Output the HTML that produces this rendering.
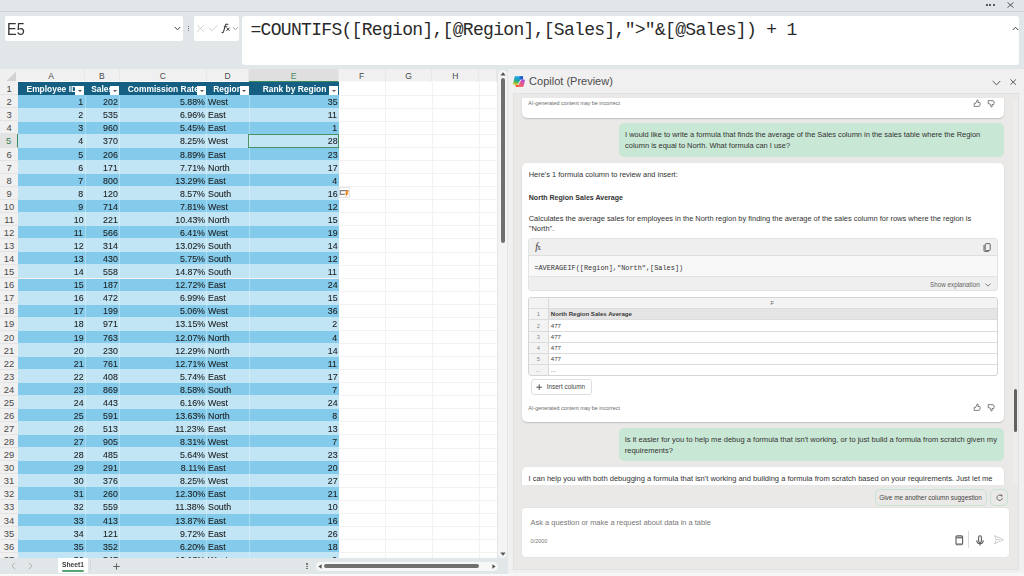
<!DOCTYPE html>
<html><head><meta charset="utf-8">
<style>
*{box-sizing:border-box;margin:0;padding:0}
html,body{width:1024px;height:576px;overflow:hidden;background:#e1e6e9;font-family:"Liberation Sans",sans-serif;position:relative}
.abs{position:absolute}
#top{position:absolute;left:0;top:0;width:1024px;height:12px;background:#e0e6e9;border-bottom:1.4px solid #cdd3d6;box-shadow:0 0.6px 1px rgba(0,0,0,.05)}
#fbar{position:absolute;left:0;top:12px;width:1024px;height:57.3px;background:#e1e6e9}
.wbox{position:absolute;background:#fff;border-radius:2px}
#sheet{position:absolute;left:0;top:69.3px;width:497.2px;height:488.7px;background:#fff;overflow:hidden}
#sheetin{position:absolute;left:0;top:-69.3px;width:497.2px;height:576px}
.colhdr{position:absolute;background:#f0f0f0}
.ch{position:absolute;top:69.3px;height:12.9px;font-size:8.5px;line-height:15.2px;text-align:center;color:#4a4a4a;border-right:1px solid #e8e8e8;border-bottom:1px solid #fafafa}
.ch.sel{background:#dfdfdf;color:#4b8b5f;border-bottom:1.2px solid #3f8a5a}
.rh{position:absolute;left:0;width:18px;height:13.07px;background:#f0f0f0;font-size:9.4px;line-height:13.3px;text-align:center;color:#4a4a4a;border-bottom:1px solid #e4e4e4}
.rh.sel{background:#e2e2e2;color:#3b7d50;border-right:1.5px solid #3c8a56}
.gl{position:absolute;left:18px;width:480px;height:1px;background:#f2f2f2}
.vl{position:absolute;top:82.2px;width:1px;height:480px;background:#f2f2f2}
.thead{position:absolute;background:#156082}
.th{position:absolute;height:13.07px;font-size:8.6px;font-weight:bold;color:#fff;line-height:14.4px;text-align:center;overflow:hidden;white-space:nowrap}
.th span{display:inline-block;transform:scaleX(.98);transform-origin:center}
.fb{position:absolute;width:9px;height:9px;background:#fff}
.fb:after{content:"";position:absolute;left:2.6px;top:3.6px;border-left:2px solid transparent;border-right:2px solid transparent;border-top:2px solid #555}
.band{position:absolute;left:18px;width:320.8px;height:13.07px}
.b1{background:#84cbeb}
.b2{background:#c1e5f5}
.td{position:absolute;height:13.07px;font-size:9.5px;line-height:14.2px;color:#1a1a1a;white-space:nowrap;-webkit-text-stroke:0.08px #1a1a1a}
.td.r{text-align:right}
.td.r span{display:inline-block;transform:scaleX(.93);transform-origin:right}
.td.l span{display:inline-block;transform:scaleX(.93);transform-origin:left}
.tdiv{position:absolute;width:1px;background:rgba(255,255,255,.3)}
.selbox{position:absolute;border:1px solid #4a9262}
#vscroll{position:absolute;left:497.6px;top:69.6px;width:9.4px;height:488.8px;background:#f4f4f4;border-radius:5px}
#bottombar{position:absolute;left:0;top:558px;width:508px;height:17px;background:#e1e6e9}
#copilot{position:absolute;left:507.6px;top:69.3px;width:516.4px;height:506.7px;background:#f0f0f0}
#chat{position:absolute;left:513.2px;top:92.6px;width:505.5px;height:477px;background:#ebe9e7;border:1px solid #e3e1df}
.card{position:absolute;background:#fff;border-radius:5px;box-shadow:0 1px 1.5px rgba(0,0,0,.18)}
.bubble{position:absolute;background:#c9e7d5;border-radius:5px}
.t{position:absolute;white-space:nowrap;color:#303030}
</style></head><body>
<div id="top"></div>
<!-- top-right window icons -->
<div class="abs" style="left:985.8px;top:4.2px;width:9px;height:3px">
  <div class="abs" style="left:0;top:0;width:1.8px;height:1.8px;background:#5a5a5a"></div>
  <div class="abs" style="left:3.5px;top:0;width:1.8px;height:1.8px;background:#5a5a5a"></div>
  <div class="abs" style="left:7px;top:0;width:1.8px;height:1.8px;background:#5a5a5a"></div>
</div>
<svg class="abs" style="left:1007.4px;top:2.2px" width="7" height="6" viewBox="0 0 7 6"><path d="M0.5 0.4 L6.5 5.6 M6.5 0.4 L0.5 5.6" stroke="#444" stroke-width="0.9"/></svg>
<div id="fbar"></div>
<div class="wbox" style="left:5px;top:16px;width:177.7px;height:24.7px"></div>
<div class="t" style="left:6.8px;top:17px;font-size:17.2px;line-height:24px;color:#333;transform:scaleX(.84);transform-origin:left">E5</div>
<svg class="abs" style="left:173.8px;top:25.8px" width="7" height="5" viewBox="0 0 7 5"><path d="M0.8 1 L3.5 3.8 L6.2 1" stroke="#444" stroke-width="1" fill="none"/></svg>
<div class="abs" style="left:187.8px;top:25.6px;width:1.5px;height:1.5px;background:#555;border-radius:1px"></div>
<div class="abs" style="left:187.8px;top:27.7px;width:1.5px;height:1.5px;background:#555;border-radius:1px"></div>
<div class="abs" style="left:187.8px;top:29.8px;width:1.5px;height:1.5px;background:#555;border-radius:1px"></div>
<div class="wbox" style="left:194.4px;top:16px;width:44.2px;height:24.7px"></div>
<svg class="abs" style="left:192px;top:18px" width="50" height="20" viewBox="0 0 50 20">
<path d="M5.3 7.2 L11.9 13.6 M11.9 7.2 L5.3 13.6" stroke="#c4c4c4" stroke-width="0.8" fill="none"/>
<path d="M17.2 9.6 L19.8 12.8 L25.5 7.2" stroke="#c4c4c4" stroke-width="0.8" fill="none"/>
<path d="M35.8 6.4 C34.6 5.6 33.6 6.4 33.2 8 L31.6 13.4 C31.2 14.6 30.6 14.9 30 14.3" stroke="#3a3a3a" stroke-width="1.1" fill="none" stroke-linecap="round"/>
<path d="M31.8 8.6 H35.4" stroke="#3a3a3a" stroke-width="0.8"/>
<path d="M34.4 9.6 L37.6 12.9 M37.6 9.6 L34.4 12.9" stroke="#3a3a3a" stroke-width="1" fill="none"/>
<path d="M40.9 9.2 L43.4 11.6 L45.9 9.2" stroke="#8a8a8a" stroke-width="0.8" fill="none"/>
</svg>
<div class="wbox" style="left:242.3px;top:16px;width:776.7px;height:48.7px;border-radius:3px"></div>
<div class="t" style="left:250.5px;top:18.7px;font-family:'Liberation Mono',monospace;font-size:18px;letter-spacing:-0.69px;line-height:22px;color:#2a2a2a">=COUNTIFS([Region],[@Region],[Sales],"&gt;"&amp;[@Sales]) + 1</div>
<svg class="abs" style="left:1011.5px;top:25.5px" width="7" height="5" viewBox="0 0 7 5"><path d="M0.8 4 L3.5 1.2 L6.2 4" stroke="#444" stroke-width="1" fill="none"/></svg>

<div id="sheet"><div id="sheetin">
<div class="colhdr" style="left:0;top:69.3px;width:497.2px;height:12.9px"></div>
<div class="ch" style="left:18px;width:67px">A</div>
<div class="ch" style="left:85px;width:34.8px">B</div>
<div class="ch" style="left:119.8px;width:86.8px">C</div>
<div class="ch" style="left:206.6px;width:42.8px">D</div>
<div class="ch sel" style="left:249.4px;width:89.4px">E</div>
<div class="ch" style="left:338.8px;width:46.8px">F</div>
<div class="ch" style="left:385.6px;width:46.8px">G</div>
<div class="ch" style="left:432.4px;width:46.8px">H</div>
<div class="ch" style="left:479.2px;width:18px"></div>
<div class="rh" style="top:82.2px">1</div>
<div class="gl" style="top:94.67px"></div>
<div class="rh" style="top:95.27px">2</div>
<div class="gl" style="top:107.74px"></div>
<div class="rh" style="top:108.34px">3</div>
<div class="gl" style="top:120.81px"></div>
<div class="rh" style="top:121.41px">4</div>
<div class="gl" style="top:133.88px"></div>
<div class="rh sel" style="top:134.48px">5</div>
<div class="gl" style="top:146.95px"></div>
<div class="rh" style="top:147.55px">6</div>
<div class="gl" style="top:160.02px"></div>
<div class="rh" style="top:160.62px">7</div>
<div class="gl" style="top:173.09px"></div>
<div class="rh" style="top:173.69px">8</div>
<div class="gl" style="top:186.16px"></div>
<div class="rh" style="top:186.76px">9</div>
<div class="gl" style="top:199.23px"></div>
<div class="rh" style="top:199.83px">10</div>
<div class="gl" style="top:212.3px"></div>
<div class="rh" style="top:212.9px">11</div>
<div class="gl" style="top:225.37px"></div>
<div class="rh" style="top:225.97px">12</div>
<div class="gl" style="top:238.44px"></div>
<div class="rh" style="top:239.04px">13</div>
<div class="gl" style="top:251.51px"></div>
<div class="rh" style="top:252.11px">14</div>
<div class="gl" style="top:264.58px"></div>
<div class="rh" style="top:265.18px">15</div>
<div class="gl" style="top:277.65px"></div>
<div class="rh" style="top:278.25px">16</div>
<div class="gl" style="top:290.72px"></div>
<div class="rh" style="top:291.32px">17</div>
<div class="gl" style="top:303.79px"></div>
<div class="rh" style="top:304.39px">18</div>
<div class="gl" style="top:316.86px"></div>
<div class="rh" style="top:317.46px">19</div>
<div class="gl" style="top:329.93px"></div>
<div class="rh" style="top:330.53px">20</div>
<div class="gl" style="top:343px"></div>
<div class="rh" style="top:343.6px">21</div>
<div class="gl" style="top:356.07px"></div>
<div class="rh" style="top:356.67px">22</div>
<div class="gl" style="top:369.14px"></div>
<div class="rh" style="top:369.74px">23</div>
<div class="gl" style="top:382.21px"></div>
<div class="rh" style="top:382.81px">24</div>
<div class="gl" style="top:395.28px"></div>
<div class="rh" style="top:395.88px">25</div>
<div class="gl" style="top:408.35px"></div>
<div class="rh" style="top:408.95px">26</div>
<div class="gl" style="top:421.42px"></div>
<div class="rh" style="top:422.02px">27</div>
<div class="gl" style="top:434.49px"></div>
<div class="rh" style="top:435.09px">28</div>
<div class="gl" style="top:447.56px"></div>
<div class="rh" style="top:448.16px">29</div>
<div class="gl" style="top:460.63px"></div>
<div class="rh" style="top:461.23px">30</div>
<div class="gl" style="top:473.7px"></div>
<div class="rh" style="top:474.3px">31</div>
<div class="gl" style="top:486.77px"></div>
<div class="rh" style="top:487.37px">32</div>
<div class="gl" style="top:499.84px"></div>
<div class="rh" style="top:500.44px">33</div>
<div class="gl" style="top:512.91px"></div>
<div class="rh" style="top:513.51px">34</div>
<div class="gl" style="top:525.98px"></div>
<div class="rh" style="top:526.58px">35</div>
<div class="gl" style="top:539.05px"></div>
<div class="rh" style="top:539.65px">36</div>
<div class="gl" style="top:552.12px"></div>
<div class="rh" style="top:552.72px">37</div>
<div class="gl" style="top:565.19px"></div>
<div class="vl" style="left:338.3px"></div>
<div class="vl" style="left:385.1px"></div>
<div class="vl" style="left:431.9px"></div>
<div class="vl" style="left:478.7px"></div>
<div class="thead" style="left:18px;top:82.2px;width:320.8px;height:13.07px"></div>
<div class="th" style="left:18px;top:82.2px;width:67px"><span>Employee ID</span></div>
<div class="fb" style="left:75.4px;top:86px"></div>
<div class="th" style="left:85px;top:82.2px;width:34.8px"><span>Sales</span></div>
<div class="fb" style="left:110.2px;top:86px"></div>
<div class="th" style="left:119.8px;top:82.2px;width:86.8px"><span>Commission Rate</span></div>
<div class="fb" style="left:197px;top:86px"></div>
<div class="th" style="left:206.6px;top:82.2px;width:42.8px"><span>Region</span></div>
<div class="fb" style="left:239.8px;top:86px"></div>
<div class="th" style="left:249.4px;top:82.2px;width:89.4px"><span>Rank by Region</span></div>
<div class="fb" style="left:329.2px;top:86px"></div>
<div class="band b1" style="top:95.2px;height:12.4px"></div>
<div class="td r" style="left:18px;top:95.27px;width:65.3px"><span>1</span></div>
<div class="td r" style="left:85px;top:95.27px;width:33.1px"><span>202</span></div>
<div class="td r" style="left:119.8px;top:95.27px;width:85.1px"><span>5.88%</span></div>
<div class="td l" style="left:208.1px;top:95.27px;width:40.8px"><span>West</span></div>
<div class="td r" style="left:249.4px;top:95.27px;width:87.7px"><span>35</span></div>
<div class="band b2" style="top:107.6px;height:14.18px"></div>
<div class="td r" style="left:18px;top:108.34px;width:65.3px"><span>2</span></div>
<div class="td r" style="left:85px;top:108.34px;width:33.1px"><span>535</span></div>
<div class="td r" style="left:119.8px;top:108.34px;width:85.1px"><span>6.96%</span></div>
<div class="td l" style="left:208.1px;top:108.34px;width:40.8px"><span>East</span></div>
<div class="td r" style="left:249.4px;top:108.34px;width:87.7px"><span>11</span></div>
<div class="band b1" style="top:121.78px;height:11.96px"></div>
<div class="td r" style="left:18px;top:121.41px;width:65.3px"><span>3</span></div>
<div class="td r" style="left:85px;top:121.41px;width:33.1px"><span>960</span></div>
<div class="td r" style="left:119.8px;top:121.41px;width:85.1px"><span>5.45%</span></div>
<div class="td l" style="left:208.1px;top:121.41px;width:40.8px"><span>East</span></div>
<div class="td r" style="left:249.4px;top:121.41px;width:87.7px"><span>1</span></div>
<div class="band b2" style="top:133.74px;height:14.16px"></div>
<div class="td r" style="left:18px;top:134.48px;width:65.3px"><span>4</span></div>
<div class="td r" style="left:85px;top:134.48px;width:33.1px"><span>370</span></div>
<div class="td r" style="left:119.8px;top:134.48px;width:85.1px"><span>8.25%</span></div>
<div class="td l" style="left:208.1px;top:134.48px;width:40.8px"><span>West</span></div>
<div class="td r" style="left:249.4px;top:134.48px;width:87.7px"><span>28</span></div>
<div class="band b1" style="top:147.9px;height:11.98px"></div>
<div class="td r" style="left:18px;top:147.55px;width:65.3px"><span>5</span></div>
<div class="td r" style="left:85px;top:147.55px;width:33.1px"><span>206</span></div>
<div class="td r" style="left:119.8px;top:147.55px;width:85.1px"><span>8.89%</span></div>
<div class="td l" style="left:208.1px;top:147.55px;width:40.8px"><span>East</span></div>
<div class="td r" style="left:249.4px;top:147.55px;width:87.7px"><span>23</span></div>
<div class="band b2" style="top:159.88px;height:14.14px"></div>
<div class="td r" style="left:18px;top:160.62px;width:65.3px"><span>6</span></div>
<div class="td r" style="left:85px;top:160.62px;width:33.1px"><span>171</span></div>
<div class="td r" style="left:119.8px;top:160.62px;width:85.1px"><span>7.71%</span></div>
<div class="td l" style="left:208.1px;top:160.62px;width:40.8px"><span>North</span></div>
<div class="td r" style="left:249.4px;top:160.62px;width:87.7px"><span>17</span></div>
<div class="band b1" style="top:174.02px;height:12px"></div>
<div class="td r" style="left:18px;top:173.69px;width:65.3px"><span>7</span></div>
<div class="td r" style="left:85px;top:173.69px;width:33.1px"><span>800</span></div>
<div class="td r" style="left:119.8px;top:173.69px;width:85.1px"><span>13.29%</span></div>
<div class="td l" style="left:208.1px;top:173.69px;width:40.8px"><span>East</span></div>
<div class="td r" style="left:249.4px;top:173.69px;width:87.7px"><span>4</span></div>
<div class="band b2" style="top:186.02px;height:14.12px"></div>
<div class="td r" style="left:18px;top:186.76px;width:65.3px"><span>8</span></div>
<div class="td r" style="left:85px;top:186.76px;width:33.1px"><span>120</span></div>
<div class="td r" style="left:119.8px;top:186.76px;width:85.1px"><span>8.57%</span></div>
<div class="td l" style="left:208.1px;top:186.76px;width:40.8px"><span>South</span></div>
<div class="td r" style="left:249.4px;top:186.76px;width:87.7px"><span>16</span></div>
<div class="band b1" style="top:200.14px;height:12.02px"></div>
<div class="td r" style="left:18px;top:199.83px;width:65.3px"><span>9</span></div>
<div class="td r" style="left:85px;top:199.83px;width:33.1px"><span>714</span></div>
<div class="td r" style="left:119.8px;top:199.83px;width:85.1px"><span>7.81%</span></div>
<div class="td l" style="left:208.1px;top:199.83px;width:40.8px"><span>West</span></div>
<div class="td r" style="left:249.4px;top:199.83px;width:87.7px"><span>12</span></div>
<div class="band b2" style="top:212.16px;height:14.1px"></div>
<div class="td r" style="left:18px;top:212.9px;width:65.3px"><span>10</span></div>
<div class="td r" style="left:85px;top:212.9px;width:33.1px"><span>221</span></div>
<div class="td r" style="left:119.8px;top:212.9px;width:85.1px"><span>10.43%</span></div>
<div class="td l" style="left:208.1px;top:212.9px;width:40.8px"><span>North</span></div>
<div class="td r" style="left:249.4px;top:212.9px;width:87.7px"><span>15</span></div>
<div class="band b1" style="top:226.26px;height:12.04px"></div>
<div class="td r" style="left:18px;top:225.97px;width:65.3px"><span>11</span></div>
<div class="td r" style="left:85px;top:225.97px;width:33.1px"><span>566</span></div>
<div class="td r" style="left:119.8px;top:225.97px;width:85.1px"><span>6.41%</span></div>
<div class="td l" style="left:208.1px;top:225.97px;width:40.8px"><span>West</span></div>
<div class="td r" style="left:249.4px;top:225.97px;width:87.7px"><span>19</span></div>
<div class="band b2" style="top:238.3px;height:14.08px"></div>
<div class="td r" style="left:18px;top:239.04px;width:65.3px"><span>12</span></div>
<div class="td r" style="left:85px;top:239.04px;width:33.1px"><span>314</span></div>
<div class="td r" style="left:119.8px;top:239.04px;width:85.1px"><span>13.02%</span></div>
<div class="td l" style="left:208.1px;top:239.04px;width:40.8px"><span>South</span></div>
<div class="td r" style="left:249.4px;top:239.04px;width:87.7px"><span>14</span></div>
<div class="band b1" style="top:252.38px;height:12.06px"></div>
<div class="td r" style="left:18px;top:252.11px;width:65.3px"><span>13</span></div>
<div class="td r" style="left:85px;top:252.11px;width:33.1px"><span>430</span></div>
<div class="td r" style="left:119.8px;top:252.11px;width:85.1px"><span>5.75%</span></div>
<div class="td l" style="left:208.1px;top:252.11px;width:40.8px"><span>South</span></div>
<div class="td r" style="left:249.4px;top:252.11px;width:87.7px"><span>12</span></div>
<div class="band b2" style="top:264.44px;height:14.06px"></div>
<div class="td r" style="left:18px;top:265.18px;width:65.3px"><span>14</span></div>
<div class="td r" style="left:85px;top:265.18px;width:33.1px"><span>558</span></div>
<div class="td r" style="left:119.8px;top:265.18px;width:85.1px"><span>14.87%</span></div>
<div class="td l" style="left:208.1px;top:265.18px;width:40.8px"><span>South</span></div>
<div class="td r" style="left:249.4px;top:265.18px;width:87.7px"><span>11</span></div>
<div class="band b1" style="top:278.5px;height:12.08px"></div>
<div class="td r" style="left:18px;top:278.25px;width:65.3px"><span>15</span></div>
<div class="td r" style="left:85px;top:278.25px;width:33.1px"><span>187</span></div>
<div class="td r" style="left:119.8px;top:278.25px;width:85.1px"><span>12.72%</span></div>
<div class="td l" style="left:208.1px;top:278.25px;width:40.8px"><span>East</span></div>
<div class="td r" style="left:249.4px;top:278.25px;width:87.7px"><span>24</span></div>
<div class="band b2" style="top:290.58px;height:14.04px"></div>
<div class="td r" style="left:18px;top:291.32px;width:65.3px"><span>16</span></div>
<div class="td r" style="left:85px;top:291.32px;width:33.1px"><span>472</span></div>
<div class="td r" style="left:119.8px;top:291.32px;width:85.1px"><span>6.99%</span></div>
<div class="td l" style="left:208.1px;top:291.32px;width:40.8px"><span>East</span></div>
<div class="td r" style="left:249.4px;top:291.32px;width:87.7px"><span>15</span></div>
<div class="band b1" style="top:304.62px;height:12.1px"></div>
<div class="td r" style="left:18px;top:304.39px;width:65.3px"><span>17</span></div>
<div class="td r" style="left:85px;top:304.39px;width:33.1px"><span>199</span></div>
<div class="td r" style="left:119.8px;top:304.39px;width:85.1px"><span>5.06%</span></div>
<div class="td l" style="left:208.1px;top:304.39px;width:40.8px"><span>West</span></div>
<div class="td r" style="left:249.4px;top:304.39px;width:87.7px"><span>36</span></div>
<div class="band b2" style="top:316.72px;height:14.02px"></div>
<div class="td r" style="left:18px;top:317.46px;width:65.3px"><span>18</span></div>
<div class="td r" style="left:85px;top:317.46px;width:33.1px"><span>971</span></div>
<div class="td r" style="left:119.8px;top:317.46px;width:85.1px"><span>13.15%</span></div>
<div class="td l" style="left:208.1px;top:317.46px;width:40.8px"><span>West</span></div>
<div class="td r" style="left:249.4px;top:317.46px;width:87.7px"><span>2</span></div>
<div class="band b1" style="top:330.74px;height:12.12px"></div>
<div class="td r" style="left:18px;top:330.53px;width:65.3px"><span>19</span></div>
<div class="td r" style="left:85px;top:330.53px;width:33.1px"><span>763</span></div>
<div class="td r" style="left:119.8px;top:330.53px;width:85.1px"><span>12.07%</span></div>
<div class="td l" style="left:208.1px;top:330.53px;width:40.8px"><span>North</span></div>
<div class="td r" style="left:249.4px;top:330.53px;width:87.7px"><span>4</span></div>
<div class="band b2" style="top:342.86px;height:14px"></div>
<div class="td r" style="left:18px;top:343.6px;width:65.3px"><span>20</span></div>
<div class="td r" style="left:85px;top:343.6px;width:33.1px"><span>230</span></div>
<div class="td r" style="left:119.8px;top:343.6px;width:85.1px"><span>12.29%</span></div>
<div class="td l" style="left:208.1px;top:343.6px;width:40.8px"><span>North</span></div>
<div class="td r" style="left:249.4px;top:343.6px;width:87.7px"><span>14</span></div>
<div class="band b1" style="top:356.86px;height:12.14px"></div>
<div class="td r" style="left:18px;top:356.67px;width:65.3px"><span>21</span></div>
<div class="td r" style="left:85px;top:356.67px;width:33.1px"><span>761</span></div>
<div class="td r" style="left:119.8px;top:356.67px;width:85.1px"><span>12.71%</span></div>
<div class="td l" style="left:208.1px;top:356.67px;width:40.8px"><span>West</span></div>
<div class="td r" style="left:249.4px;top:356.67px;width:87.7px"><span>11</span></div>
<div class="band b2" style="top:369px;height:13.98px"></div>
<div class="td r" style="left:18px;top:369.74px;width:65.3px"><span>22</span></div>
<div class="td r" style="left:85px;top:369.74px;width:33.1px"><span>408</span></div>
<div class="td r" style="left:119.8px;top:369.74px;width:85.1px"><span>5.74%</span></div>
<div class="td l" style="left:208.1px;top:369.74px;width:40.8px"><span>East</span></div>
<div class="td r" style="left:249.4px;top:369.74px;width:87.7px"><span>17</span></div>
<div class="band b1" style="top:382.98px;height:12.16px"></div>
<div class="td r" style="left:18px;top:382.81px;width:65.3px"><span>23</span></div>
<div class="td r" style="left:85px;top:382.81px;width:33.1px"><span>869</span></div>
<div class="td r" style="left:119.8px;top:382.81px;width:85.1px"><span>8.58%</span></div>
<div class="td l" style="left:208.1px;top:382.81px;width:40.8px"><span>South</span></div>
<div class="td r" style="left:249.4px;top:382.81px;width:87.7px"><span>7</span></div>
<div class="band b2" style="top:395.14px;height:13.96px"></div>
<div class="td r" style="left:18px;top:395.88px;width:65.3px"><span>24</span></div>
<div class="td r" style="left:85px;top:395.88px;width:33.1px"><span>443</span></div>
<div class="td r" style="left:119.8px;top:395.88px;width:85.1px"><span>6.16%</span></div>
<div class="td l" style="left:208.1px;top:395.88px;width:40.8px"><span>West</span></div>
<div class="td r" style="left:249.4px;top:395.88px;width:87.7px"><span>24</span></div>
<div class="band b1" style="top:409.1px;height:12.18px"></div>
<div class="td r" style="left:18px;top:408.95px;width:65.3px"><span>25</span></div>
<div class="td r" style="left:85px;top:408.95px;width:33.1px"><span>591</span></div>
<div class="td r" style="left:119.8px;top:408.95px;width:85.1px"><span>13.63%</span></div>
<div class="td l" style="left:208.1px;top:408.95px;width:40.8px"><span>North</span></div>
<div class="td r" style="left:249.4px;top:408.95px;width:87.7px"><span>8</span></div>
<div class="band b2" style="top:421.28px;height:13.94px"></div>
<div class="td r" style="left:18px;top:422.02px;width:65.3px"><span>26</span></div>
<div class="td r" style="left:85px;top:422.02px;width:33.1px"><span>513</span></div>
<div class="td r" style="left:119.8px;top:422.02px;width:85.1px"><span>11.23%</span></div>
<div class="td l" style="left:208.1px;top:422.02px;width:40.8px"><span>East</span></div>
<div class="td r" style="left:249.4px;top:422.02px;width:87.7px"><span>13</span></div>
<div class="band b1" style="top:435.22px;height:12.2px"></div>
<div class="td r" style="left:18px;top:435.09px;width:65.3px"><span>27</span></div>
<div class="td r" style="left:85px;top:435.09px;width:33.1px"><span>905</span></div>
<div class="td r" style="left:119.8px;top:435.09px;width:85.1px"><span>8.31%</span></div>
<div class="td l" style="left:208.1px;top:435.09px;width:40.8px"><span>West</span></div>
<div class="td r" style="left:249.4px;top:435.09px;width:87.7px"><span>7</span></div>
<div class="band b2" style="top:447.42px;height:13.92px"></div>
<div class="td r" style="left:18px;top:448.16px;width:65.3px"><span>28</span></div>
<div class="td r" style="left:85px;top:448.16px;width:33.1px"><span>485</span></div>
<div class="td r" style="left:119.8px;top:448.16px;width:85.1px"><span>5.64%</span></div>
<div class="td l" style="left:208.1px;top:448.16px;width:40.8px"><span>West</span></div>
<div class="td r" style="left:249.4px;top:448.16px;width:87.7px"><span>23</span></div>
<div class="band b1" style="top:461.34px;height:12.22px"></div>
<div class="td r" style="left:18px;top:461.23px;width:65.3px"><span>29</span></div>
<div class="td r" style="left:85px;top:461.23px;width:33.1px"><span>291</span></div>
<div class="td r" style="left:119.8px;top:461.23px;width:85.1px"><span>8.11%</span></div>
<div class="td l" style="left:208.1px;top:461.23px;width:40.8px"><span>East</span></div>
<div class="td r" style="left:249.4px;top:461.23px;width:87.7px"><span>20</span></div>
<div class="band b2" style="top:473.56px;height:13.9px"></div>
<div class="td r" style="left:18px;top:474.3px;width:65.3px"><span>30</span></div>
<div class="td r" style="left:85px;top:474.3px;width:33.1px"><span>376</span></div>
<div class="td r" style="left:119.8px;top:474.3px;width:85.1px"><span>8.25%</span></div>
<div class="td l" style="left:208.1px;top:474.3px;width:40.8px"><span>West</span></div>
<div class="td r" style="left:249.4px;top:474.3px;width:87.7px"><span>27</span></div>
<div class="band b1" style="top:487.46px;height:12.24px"></div>
<div class="td r" style="left:18px;top:487.37px;width:65.3px"><span>31</span></div>
<div class="td r" style="left:85px;top:487.37px;width:33.1px"><span>260</span></div>
<div class="td r" style="left:119.8px;top:487.37px;width:85.1px"><span>12.30%</span></div>
<div class="td l" style="left:208.1px;top:487.37px;width:40.8px"><span>East</span></div>
<div class="td r" style="left:249.4px;top:487.37px;width:87.7px"><span>21</span></div>
<div class="band b2" style="top:499.7px;height:13.88px"></div>
<div class="td r" style="left:18px;top:500.44px;width:65.3px"><span>32</span></div>
<div class="td r" style="left:85px;top:500.44px;width:33.1px"><span>559</span></div>
<div class="td r" style="left:119.8px;top:500.44px;width:85.1px"><span>11.38%</span></div>
<div class="td l" style="left:208.1px;top:500.44px;width:40.8px"><span>South</span></div>
<div class="td r" style="left:249.4px;top:500.44px;width:87.7px"><span>10</span></div>
<div class="band b1" style="top:513.58px;height:12.26px"></div>
<div class="td r" style="left:18px;top:513.51px;width:65.3px"><span>33</span></div>
<div class="td r" style="left:85px;top:513.51px;width:33.1px"><span>413</span></div>
<div class="td r" style="left:119.8px;top:513.51px;width:85.1px"><span>13.87%</span></div>
<div class="td l" style="left:208.1px;top:513.51px;width:40.8px"><span>East</span></div>
<div class="td r" style="left:249.4px;top:513.51px;width:87.7px"><span>16</span></div>
<div class="band b2" style="top:525.84px;height:13.86px"></div>
<div class="td r" style="left:18px;top:526.58px;width:65.3px"><span>34</span></div>
<div class="td r" style="left:85px;top:526.58px;width:33.1px"><span>121</span></div>
<div class="td r" style="left:119.8px;top:526.58px;width:85.1px"><span>9.72%</span></div>
<div class="td l" style="left:208.1px;top:526.58px;width:40.8px"><span>East</span></div>
<div class="td r" style="left:249.4px;top:526.58px;width:87.7px"><span>26</span></div>
<div class="band b1" style="top:539.7px;height:12.28px"></div>
<div class="td r" style="left:18px;top:539.65px;width:65.3px"><span>35</span></div>
<div class="td r" style="left:85px;top:539.65px;width:33.1px"><span>352</span></div>
<div class="td r" style="left:119.8px;top:539.65px;width:85.1px"><span>6.20%</span></div>
<div class="td l" style="left:208.1px;top:539.65px;width:40.8px"><span>East</span></div>
<div class="td r" style="left:249.4px;top:539.65px;width:87.7px"><span>18</span></div>
<div class="band b2" style="top:551.98px;height:13.84px"></div>
<div class="td r" style="left:18px;top:552.72px;width:65.3px"><span>36</span></div>
<div class="td r" style="left:85px;top:552.72px;width:33.1px"><span>847</span></div>
<div class="td r" style="left:119.8px;top:552.72px;width:85.1px"><span>10.18%</span></div>
<div class="td l" style="left:208.1px;top:552.72px;width:40.8px"><span>West</span></div>
<div class="td r" style="left:249.4px;top:552.72px;width:87.7px"><span>9</span></div>
<div class="tdiv" style="left:84.5px;top:95.27px;height:462.73px"></div>
<div class="tdiv" style="left:119.3px;top:95.27px;height:462.73px"></div>
<div class="tdiv" style="left:206.1px;top:95.27px;height:462.73px"></div>
<div class="tdiv" style="left:248.9px;top:95.27px;height:462.73px"></div>
<div class="selbox" style="left:248.4px;top:134.1px;width:90.4px;height:13.6px"></div>
<div class="abs" style="left:337.6px;top:146.6px;width:1.8px;height:1.8px;background:#3e8a58"></div>
<!-- select all triangle -->
<svg class="abs" style="left:6px;top:71px" width="11" height="11" viewBox="0 0 11 11"><path d="M10 0.5 L10 10 L0.5 10 Z" fill="#d2d2d2"/></svg>
<!-- quick analysis icon -->
<div class="abs" style="left:339.3px;top:187.2px;width:10.4px;height:10.8px;background:#fff;border:1px solid #e4e4e4"></div>
<svg class="abs" style="left:339.3px;top:187.2px" width="11" height="11" viewBox="0 0 11 11"><path d="M9.2 3.6 H1.4 V7.4 H5.8" stroke="#808080" stroke-width="1.1" fill="none"/><path d="M7.4 3.4 L10 3.4 L8.6 6 L9.8 6 L6.4 10.2 L7.1 7.2 L6 7.2 Z" fill="#f08a24"/></svg>
</div></div>

<div id="vscroll"></div>
<svg class="abs" style="left:500px;top:72px" width="6" height="4" viewBox="0 0 6 4"><path d="M3 0.3 L5.7 3.6 L0.3 3.6 Z" fill="#555"/></svg>
<div class="abs" style="left:500.8px;top:78px;width:4px;height:165px;background:#707070;border-radius:2px"></div>
<svg class="abs" style="left:500px;top:552px" width="6" height="4" viewBox="0 0 6 4"><path d="M3 3.7 L5.7 0.4 L0.3 0.4 Z" fill="#555"/></svg>

<div id="bottombar"></div>
<div class="abs" style="left:0;top:573.8px;width:508px;height:2.2px;background:#f9f9f9"></div>
<svg class="abs" style="left:10.5px;top:562px" width="5" height="8" viewBox="0 0 5 8"><path d="M4 0.8 L1 4 L4 7.2" stroke="#aaa" stroke-width="0.9" fill="none"/></svg>
<svg class="abs" style="left:28px;top:562px" width="5" height="8" viewBox="0 0 5 8"><path d="M1 0.8 L4 4 L1 7.2" stroke="#aaa" stroke-width="0.9" fill="none"/></svg>
<div class="abs" style="left:57.6px;top:558px;width:30.7px;height:15.1px;background:#fff;border-radius:0 0 2px 2px"></div>
<div class="t" style="left:62px;top:560.2px;font-size:7.9px;line-height:10px;font-weight:bold;color:#3a3a3a;transform:scaleX(.85);transform-origin:left">Sheet1</div>
<div class="abs" style="left:62px;top:570px;width:22px;height:1.5px;background:#55a372;border-radius:1px"></div>
<div class="abs" style="left:90.4px;top:561px;width:0.8px;height:9px;background:#cfd4d7"></div>
<svg class="abs" style="left:112.8px;top:562.8px" width="7" height="7" viewBox="0 0 7 7"><path d="M3.5 0.3 V6.7 M0.3 3.5 H6.7" stroke="#555" stroke-width="0.9"/></svg>
<div class="abs" style="left:306.4px;top:563.4px;width:1.3px;height:1.3px;background:#777"></div>
<div class="abs" style="left:306.4px;top:565.8px;width:1.3px;height:1.3px;background:#777"></div>
<div class="abs" style="left:306.4px;top:568.2px;width:1.3px;height:1.3px;background:#777"></div>
<div class="abs" style="left:315.8px;top:561.8px;width:182px;height:9.6px;background:#f7f7f7;border-radius:5px"></div>
<svg class="abs" style="left:318px;top:564.4px" width="4" height="5" viewBox="0 0 4 5"><path d="M0.3 2.5 L3.6 0.2 L3.6 4.8 Z" fill="#555"/></svg>
<div class="abs" style="left:323.7px;top:564.3px;width:155px;height:4.2px;background:#707070;border-radius:2px"></div>
<svg class="abs" style="left:492px;top:564.4px" width="4" height="5" viewBox="0 0 4 5"><path d="M3.7 2.5 L0.4 0.2 L0.4 4.8 Z" fill="#555"/></svg>

<!-- COPILOT -->
<div id="copilot"></div>
<svg class="abs" style="left:513.4px;top:75.5px;filter:blur(0.25px)" width="12" height="11.2" viewBox="0 0 12 11.2">
  <defs>
    <linearGradient id="g1" x1="0.3" y1="0" x2="0" y2="1"><stop offset="0" stop-color="#1aa2f0"/><stop offset=".45" stop-color="#22a49a"/><stop offset=".72" stop-color="#7cc13e"/><stop offset="1" stop-color="#f5c51c"/></linearGradient>
    <linearGradient id="g2" x1="1" y1="0" x2="0.2" y2="1"><stop offset="0" stop-color="#a048e8"/><stop offset=".45" stop-color="#e2529c"/><stop offset=".8" stop-color="#f46a62"/><stop offset="1" stop-color="#f98a3a"/></linearGradient>
    <linearGradient id="g3" x1="0" y1="0" x2="1" y2="0"><stop offset="0" stop-color="#2456d0" stop-opacity="0"/><stop offset=".5" stop-color="#2456d0"/><stop offset="1" stop-color="#2050c8"/></linearGradient>
    <linearGradient id="g4" x1="1" y1="0" x2="0" y2="0"><stop offset="0" stop-color="#f2542a" stop-opacity="0"/><stop offset=".5" stop-color="#f2542a"/><stop offset="1" stop-color="#f24a24"/></linearGradient>
  </defs>
  <path d="M2.6 0.2 H9.2 C10 0.2 10.3 0.8 10.1 1.6 L9.6 3.4 H7.6 L4.5 8.8 H1.2 C0.4 8.8 0 8.2 0.2 7.4 L1.5 1.4 C1.7 0.6 2.1 0.2 2.6 0.2 Z" fill="url(#g1)"/>
  <path d="M6 0.2 H9.2 C10 0.2 10.3 0.8 10.1 1.6 L9.6 3.4 H6 Z" fill="url(#g3)"/>
  <path d="M3.9 11 C3 11 2.5 10.4 2.6 9.6 L2.8 8.9 H5.4 L8.5 3.6 H10.8 C11.6 3.6 12 4.2 11.8 5 L10.6 10 C10.4 10.6 10 11 9.4 11 Z" fill="url(#g2)"/>
  <path d="M6 11 H3.9 C3 11 2.5 10.4 2.6 9.6 L2.8 8.9 H6 Z" fill="url(#g4)"/>
</svg>
<div class="t" style="left:529.1px;top:74.2px;font-size:11px;line-height:14px;color:#4c4c4c">Copilot (Preview)</div>
<svg class="abs" style="left:992px;top:79.6px" width="9" height="6" viewBox="0 0 9 6"><path d="M0.7 1 L4.5 4.8 L8.3 1" stroke="#555" stroke-width="1" fill="none"/></svg>
<svg class="abs" style="left:1009.8px;top:79.2px" width="6.4" height="6.2" viewBox="0 0 6.4 6.2"><path d="M0.4 0.4 L6 5.8 M6 0.4 L0.4 5.8" stroke="#555" stroke-width="0.95"/></svg>

<div id="chat"></div>
<div id="msgs" class="abs" style="left:513.2px;top:97.9px;width:505.5px;height:386.8px;overflow:hidden">
 <div style="position:absolute;left:-513.2px;top:-97.9px;width:1024px;height:576px">
  <!-- card 1 -->
  <div class="card" style="left:521.7px;top:80px;width:482.2px;height:37.8px"></div>
  <div class="t" style="left:528.3px;top:99.6px;font-size:5.4px;line-height:7px;color:#6a6a6a">AI-generated content may be incorrect</div>
  <svg class="abs" style="left:972.8px;top:99.4px" width="8" height="8" viewBox="0 0 8 8"><path d="M1.2 7.4 V4.3 H2.7 L4.3 0.9 C4.9 0.8 5.4 1.2 5.2 2 L4.9 3.5 H6.4 C7 3.5 7.3 4 7.2 4.6 L6.7 6.8 C6.6 7.2 6.3 7.4 5.9 7.4 Z" stroke="#555" stroke-width="0.75" fill="none" stroke-linejoin="round"/></svg>
  <svg class="abs" style="left:987.4px;top:99.6px" width="8" height="8" viewBox="0 0 8 8"><path d="M1.2 0.6 V3.7 H2.7 L4.3 7.1 C4.9 7.2 5.4 6.8 5.2 6 L4.9 4.5 H6.4 C7 4.5 7.3 4 7.2 3.4 L6.7 1.2 C6.6 0.8 6.3 0.6 5.9 0.6 Z" stroke="#555" stroke-width="0.75" fill="none" stroke-linejoin="round"/></svg>
  <!-- bubble 1 -->
  <div class="bubble" style="left:618.6px;top:123px;width:385.3px;height:33.8px"></div>
  <div class="t" style="left:625.1px;top:130px;font-size:7.44px;line-height:10.9px;color:#333">I would like to write a formula that finds the average of the Sales column in the sales table where the Region<br>column is equal to North. What formula can I use?</div>
  <!-- card 2 -->
  <div class="card" style="left:521.6px;top:162.8px;width:482.5px;height:259.4px"></div>
  <div class="t" style="left:528.75px;top:169.8px;font-size:7.44px;line-height:10px;color:#333">Here's 1 formula column to review and insert:</div>
  <div class="t" style="left:528.75px;top:193px;font-size:7.05px;line-height:10px;font-weight:bold;color:#333">North Region Sales Average</div>
  <div class="t" style="left:528.75px;top:213.8px;font-size:7.44px;line-height:10.5px;color:#333">Calculates the average sales for employees in the North region by finding the average of the sales column for rows where the region is<br>"North".</div>
  <!-- formula box -->
  <div class="abs" style="left:528.3px;top:238.2px;width:469.5px;height:52.4px;background:#efefef;border:1px solid #e3e3e3;border-radius:3px;overflow:hidden">
    <div class="abs" style="left:0;top:15.6px;width:100%;height:22.4px;background:#f8f8f8;border-top:1px solid #dedede;border-bottom:1px solid #e3e3e3"></div>
  </div>
  <div class="t" style="left:535.3px;top:242.3px;font-family:'Liberation Serif',serif;font-style:italic;font-size:9.5px;line-height:10px;color:#333;letter-spacing:-0.8px">f<span style="font-size:7.2px;font-style:normal">x</span></div>
  <svg class="abs" style="left:983px;top:242.6px" width="8" height="9" viewBox="0 0 8 9"><rect x="2.2" y="0.6" width="5" height="7" rx="1" stroke="#555" stroke-width="0.9" fill="none"/><path d="M1 2 V7.8 C1 8.2 1.2 8.4 1.6 8.4 H5.5" stroke="#555" stroke-width="0.9" fill="none"/></svg>
  <div class="t" style="left:534.3px;top:263.5px;font-family:'Liberation Mono',monospace;font-size:6.9px;line-height:9px;color:#333">=AVERAGEIF([Region],"North",[Sales])</div>
  <div class="t" style="left:930px;top:281.2px;font-size:6.3px;line-height:8px;color:#666">Show explanation</div>
  <svg class="abs" style="left:985px;top:283.2px" width="6" height="4" viewBox="0 0 6 4"><path d="M0.5 0.6 L3 3.2 L5.5 0.6" stroke="#666" stroke-width="0.8" fill="none"/></svg>
  <!-- mini table -->
  <div class="abs" style="left:528.3px;top:296.8px;width:469.5px;height:79.2px;border:1px solid #d5d5d5;border-radius:3px;overflow:hidden;background:#fff">
    <div class="abs" style="left:0;top:0;width:100%;height:11px;background:#f3f3f3"></div>
    <div class="abs" style="left:0;top:0;width:20.2px;height:100%;background:#f3f3f3;border-right:1px solid #d9d9d9"></div>
    <div class="abs" style="left:20.2px;top:11px;width:100%;height:11.5px;background:#e5e5e5"></div>
    <div class="abs" style="left:0;top:10.00px;width:100%;height:1px;background:#dcdcdc"></div>
    <div class="abs" style="left:0;top:21.50px;width:100%;height:1px;background:#dcdcdc"></div>
    <div class="abs" style="left:0;top:32.80px;width:100%;height:1px;background:#dcdcdc"></div>
    <div class="abs" style="left:0;top:43.90px;width:100%;height:1px;background:#dcdcdc"></div>
    <div class="abs" style="left:0;top:55.30px;width:100%;height:1px;background:#dcdcdc"></div>
    <div class="abs" style="left:0;top:66.00px;width:100%;height:1px;background:#dcdcdc"></div>
  </div>
  <div class="t" style="left:770.5px;top:298.6px;font-size:5.6px;line-height:8px;color:#666">F</div>
  <div class="t" style="left:528.3px;width:20.2px;text-align:center;top:310.35px;font-size:5.8px;line-height:8px;color:#8a8a8a">1</div>
  <div class="t" style="left:550.8px;top:310.35px;font-size:6.07px;line-height:8px;font-weight:bold;color:#3a3a3a">North Region Sales Average</div>
  <div class="t" style="left:528.3px;width:20.2px;text-align:center;top:321.75px;font-size:5.8px;line-height:8px;color:#8a8a8a">2</div>
  <div class="t" style="left:550.8px;top:321.75px;font-size:6.1px;line-height:8px;color:#3a3a3a">477</div>
  <div class="t" style="left:528.3px;width:20.2px;text-align:center;top:332.95px;font-size:5.8px;line-height:8px;color:#8a8a8a">3</div>
  <div class="t" style="left:550.8px;top:332.95px;font-size:6.1px;line-height:8px;color:#3a3a3a">477</div>
  <div class="t" style="left:528.3px;width:20.2px;text-align:center;top:344.20px;font-size:5.8px;line-height:8px;color:#8a8a8a">4</div>
  <div class="t" style="left:550.8px;top:344.20px;font-size:6.1px;line-height:8px;color:#3a3a3a">477</div>
  <div class="t" style="left:528.3px;width:20.2px;text-align:center;top:355.25px;font-size:5.8px;line-height:8px;color:#8a8a8a">5</div>
  <div class="t" style="left:550.8px;top:355.25px;font-size:6.1px;line-height:8px;color:#3a3a3a">477</div>
  <div class="t" style="left:528.3px;width:20.2px;text-align:center;top:366.15px;font-size:5.8px;line-height:8px;color:#8a8a8a">...</div>
  <div class="t" style="left:550.8px;top:366.15px;font-size:6.1px;line-height:8px;color:#3a3a3a">...</div>
  <!-- insert column -->
  <div class="abs" style="left:530.5px;top:378.6px;width:61.3px;height:16.2px;background:#fff;border:1px solid #dedede;border-radius:3px"></div>
  <svg class="abs" style="left:536.2px;top:384px" width="6.4" height="6.4" viewBox="0 0 7 7"><path d="M3.5 0.3 V6.7 M0.3 3.5 H6.7" stroke="#333" stroke-width="0.9"/></svg>
  <div class="t" style="left:546.7px;top:383.4px;font-size:6.4px;line-height:8px;color:#444">Insert column</div>
  <div class="t" style="left:528.3px;top:404.5px;font-size:5.4px;line-height:7px;color:#6a6a6a">AI-generated content may be incorrect</div>
  <svg class="abs" style="left:972.8px;top:403.3px" width="8" height="8" viewBox="0 0 8 8"><path d="M1.2 7.4 V4.3 H2.7 L4.3 0.9 C4.9 0.8 5.4 1.2 5.2 2 L4.9 3.5 H6.4 C7 3.5 7.3 4 7.2 4.6 L6.7 6.8 C6.6 7.2 6.3 7.4 5.9 7.4 Z" stroke="#555" stroke-width="0.75" fill="none" stroke-linejoin="round"/></svg>
  <svg class="abs" style="left:987.4px;top:403.5px" width="8" height="8" viewBox="0 0 8 8"><path d="M1.2 0.6 V3.7 H2.7 L4.3 7.1 C4.9 7.2 5.4 6.8 5.2 6 L4.9 4.5 H6.4 C7 4.5 7.3 4 7.2 3.4 L6.7 1.2 C6.6 0.8 6.3 0.6 5.9 0.6 Z" stroke="#555" stroke-width="0.75" fill="none" stroke-linejoin="round"/></svg>
  <!-- bubble 2 -->
  <div class="bubble" style="left:618.7px;top:427.6px;width:385.2px;height:33.6px"></div>
  <div class="t" style="left:624.7px;top:434.6px;font-size:7.55px;line-height:10.9px;color:#333">Is it easier for you to help me debug a formula that isn't working, or to just build a formula from scratch given my<br>requirements?</div>
  <!-- card 3 -->
  <div class="card" style="left:521.6px;top:467.4px;width:482.6px;height:60px"></div>
  <div class="t" style="left:528.5px;top:473.6px;font-size:7.54px;line-height:10.6px;color:#333">I can help you with both debugging a formula that isn't working and building a formula from scratch based on your requirements. Just let me</div>
 </div>
</div>
<!-- scrollbar of chat -->
<div class="abs" style="left:1012.6px;top:100px;width:5px;height:384px;background:#efedeb;border-radius:3px"></div>
<div class="abs" style="left:1013.6px;top:388.8px;width:3.7px;height:43.4px;background:#616161;border-radius:2px"></div>

<!-- suggestion -->
<div class="abs" style="left:874.6px;top:489.1px;width:112px;height:16.6px;border:1.2px solid #c6e4d1;border-radius:5px"></div>
<div class="t" style="left:879.2px;top:493.6px;font-size:6.41px;line-height:8px;color:#444">Give me another column suggestion</div>
<div class="abs" style="left:990.3px;top:489.1px;width:17.6px;height:16.6px;border:1.2px solid #c6e4d1;border-radius:5px"></div>
<svg class="abs" style="left:995.6px;top:493.6px" width="7.6" height="7.6" viewBox="0 0 14 14"><path d="M11.8 7.4 A5 5 0 1 1 10 3" stroke="#505050" stroke-width="1.5" fill="none"/><path d="M7.6 1.6 L11.6 1.6 L11.4 5.6 Z" fill="#505050"/></svg>

<!-- input -->
<div class="abs" style="left:522.4px;top:508px;width:487px;height:49.2px;background:#fff;border-radius:4px;box-shadow:0 0 0 0.6px #e2e2e2"></div>
<div class="t" style="left:530.6px;top:518px;font-size:7.45px;line-height:10px;color:#787878">Ask a question or make a request about data in a table</div>
<div class="t" style="left:530.6px;top:537.5px;font-size:5.5px;line-height:7px;color:#777">0/2000</div>
<svg class="abs" style="left:955.4px;top:534.6px" width="9" height="11" viewBox="0 0 9 11"><rect x="1" y="0.9" width="6.6" height="8.8" rx="1.2" stroke="#5a5a5a" stroke-width="1.1" fill="none"/><path d="M1.4 2.7 H7.2" stroke="#6a6a6a" stroke-width="1.3"/><path d="M1.4 8.8 H7.2" stroke="#8a8a8a" stroke-width="1"/></svg>
<div class="abs" style="left:968.2px;top:531.3px;width:0.9px;height:17.2px;background:#dadada"></div>
<svg class="abs" style="left:975.5px;top:534.5px" width="8" height="11" viewBox="0 0 8 11"><rect x="2.6" y="0.8" width="2.8" height="6.6" rx="1.4" stroke="#5a5a5a" stroke-width="1.1" fill="none"/><path d="M0.8 5.2 C0.8 7.4 2.2 8.6 4 8.6 C5.8 8.6 7.2 7.4 7.2 5.2 M4 8.6 V10.4" stroke="#5a5a5a" stroke-width="1.1" fill="none"/></svg>
<svg class="abs" style="left:993.5px;top:535.2px" width="10" height="9.4" viewBox="0 0 10 9.4"><path d="M0.6 0.6 L9.4 4.7 L0.6 8.8 L2.2 4.7 Z M2.2 4.7 H6" stroke="#c0c0c0" stroke-width="0.8" fill="none" stroke-linejoin="round"/></svg>
<div class="abs" style="left:507.6px;top:573px;width:516.4px;height:3px;background:#f6f6f6"></div>
</body></html>
